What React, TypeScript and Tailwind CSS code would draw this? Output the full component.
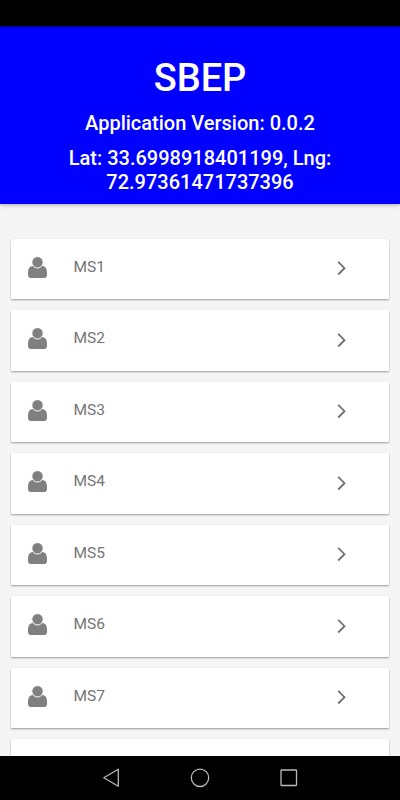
const sites = ['MS1', 'MS2', 'MS3', 'MS4', 'MS5', 'MS6', 'MS7'];

const cardClass = 'shrink-0 rounded-[1px] bg-white shadow-[0_1px_2px_rgba(0,0,0,0.38)]';

function UserIcon() {
  return (
    <svg className="ml-[17px] mt-[18px] h-[22px] w-5 shrink-0" viewBox="0 0 20 22" fill="#808080">
      <path d="M4.6 9C1.2 9.2 0 12.4 0 16v1.9c0 1.9 1.3 3.2 3.2 3.2h12.6c1.9 0 3.2-1.300 3.200-3.200V16c0-3.600-1.200-6.800-4.600-7z" />
      <circle cx="9.5" cy="5.300" r="5.700" stroke="white" strokeWidth="1" />
    </svg>
  );
}

function ChevronIcon() {
  return (
    <svg className="ml-auto mr-[41px] mt-[21.5px] h-4 w-3 shrink-0" viewBox="0 0 12 16" fill="none" stroke="#707070" strokeWidth="1.8">
      <path d="M2.2 1.9L8.500 8.200l-6.300 6.300" />
    </svg>
  );
}

function SiteCard({ name }: { name: string }) {
  return (
    <div className={`flex h-[60.5px] items-start ${cardClass}`}>
      <UserIcon />
      <span className="ml-[25.5px] mt-[18px] text-[15.5px] leading-5 text-[#757575]">{name}</span>
      <ChevronIcon />
    </div>
  );
}

export default function App() {
  return (
    <div className="flex h-[800px] w-[400px] flex-col overflow-hidden bg-[#f5f5f5] font-['Roboto',sans-serif]">
      <div className="box-content h-[26px] shrink-0 border-b border-[#000080] bg-black" />

      <header className="z-10 h-[177px] shrink-0 bg-[#0000ff] px-10 pt-7 text-center font-medium text-white shadow-[0_1px_4px_rgba(0,0,0,0.3)]">
        <h1 className="text-[38px] leading-[46px]">SBEP</h1>
        <p className="mt-[10px] text-[20px] leading-6">Application Version: 0.0.2</p>
        <p className="mt-[11px] text-[20px] leading-6">
          Lat: 33.6998918401199, Lng:
          <br />
          72.97361471737396
        </p>
      </header>

      <main className="flex min-h-0 flex-1 flex-col gap-[11px] overflow-hidden px-[11px] pt-[34.6px]">
        {sites.map((name) => (
          <SiteCard key={name} name={name} />
        ))}
        <div className={`h-[60.5px] ${cardClass}`} />
      </main>

      <nav className="z-10 flex h-11 shrink-0 items-center bg-black">
        <svg className="h-11 w-full" viewBox="0 0 400 44" fill="none" stroke="#b8b8b8" strokeWidth="1.3">
          <path d="M118.3 13.2v17L103.8 21.7z" strokeLinejoin="round" />
          <circle cx="200" cy="21.8" r="8.7" />
          <rect x="281" y="14" width="15.5" height="15.5" rx="0.5" />
        </svg>
      </nav>
    </div>
  );
}
